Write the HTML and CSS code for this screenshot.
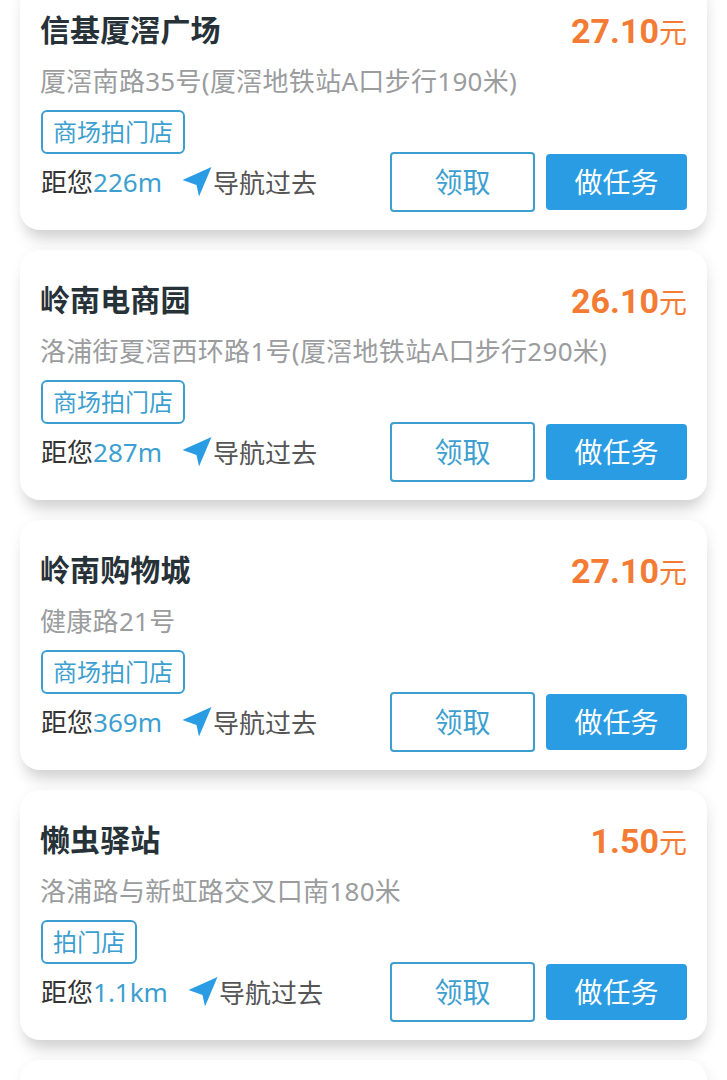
FILE: index.html
```html
<!DOCTYPE html>
<html lang="zh-CN">
<head>
  <meta charset="UTF-8" />
  <meta name="viewport" content="width=device-width, initial-scale=1.0"/>
  <title>任务列表</title>
  <link rel="stylesheet" href="styles.css">
</head>
<body>

<div class="task-list">

  <div class="task-card">
    <div class="task-head">
      <div class="task-name">信基厦滘广场</div>
      <div class="task-price"><b>27.10</b>元</div>
    </div>
    <div class="task-addr">厦滘南路35号(厦滘地铁站A口步行190米)</div>
    <div class="task-tag">商场拍门店</div>
    <div class="task-foot">
      <div class="task-dist">距您<span class="dist-num">226m</span></div>
      <div class="task-nav">
        <svg class="nav-icon" viewBox="0 0 30 30"><path d="M0.5 13 L29.5 0 L17 29.5 L14.5 18 Z"/></svg>导航过去
      </div>
      <div class="btn btn-line">领取</div>
      <div class="btn btn-fill">做任务</div>
    </div>
  </div>

  <div class="task-card">
    <div class="task-head">
      <div class="task-name">岭南电商园</div>
      <div class="task-price"><b>26.10</b>元</div>
    </div>
    <div class="task-addr">洛浦街夏滘西环路1号(厦滘地铁站A口步行290米)</div>
    <div class="task-tag">商场拍门店</div>
    <div class="task-foot">
      <div class="task-dist">距您<span class="dist-num">287m</span></div>
      <div class="task-nav">
        <svg class="nav-icon" viewBox="0 0 30 30"><path d="M0.5 13 L29.5 0 L17 29.5 L14.5 18 Z"/></svg>导航过去
      </div>
      <div class="btn btn-line">领取</div>
      <div class="btn btn-fill">做任务</div>
    </div>
  </div>

  <div class="task-card">
    <div class="task-head">
      <div class="task-name">岭南购物城</div>
      <div class="task-price"><b>27.10</b>元</div>
    </div>
    <div class="task-addr">健康路21号</div>
    <div class="task-tag">商场拍门店</div>
    <div class="task-foot">
      <div class="task-dist">距您<span class="dist-num">369m</span></div>
      <div class="task-nav">
        <svg class="nav-icon" viewBox="0 0 30 30"><path d="M0.5 13 L29.5 0 L17 29.5 L14.5 18 Z"/></svg>导航过去
      </div>
      <div class="btn btn-line">领取</div>
      <div class="btn btn-fill">做任务</div>
    </div>
  </div>

  <div class="task-card">
    <div class="task-head">
      <div class="task-name">懒虫驿站</div>
      <div class="task-price"><b>1.50</b>元</div>
    </div>
    <div class="task-addr">洛浦路与新虹路交叉口南180米</div>
    <div class="task-tag">拍门店</div>
    <div class="task-foot">
      <div class="task-dist">距您<span class="dist-num">1.1km</span></div>
      <div class="task-nav">
        <svg class="nav-icon" viewBox="0 0 30 30"><path d="M0.5 13 L29.5 0 L17 29.5 L14.5 18 Z"/></svg>导航过去
      </div>
      <div class="btn btn-line">领取</div>
      <div class="btn btn-fill">做任务</div>
    </div>
  </div>

  <div class="task-card"></div>

</div>

</body>
</html>
```

FILE: styles.css
```css
* { box-sizing: border-box; margin: 0; padding: 0; }
html, body {
  height: 1080px;
  overflow: hidden;
  background: #fff;
}
body {
  font-family: "Noto Sans", "Noto Sans CJK SC", sans-serif;
}
.task-list {
  display: flex;
  flex-direction: column;
  gap: 20px;
  height: 1100px;
  margin-top: -20px;
  padding: 0 20px;
  overflow: hidden;
}
.task-card {
  flex: none;
  height: 250px;
  padding: 30px 20px 0 21px;
  background: #fff;
  border-radius: 20px;
  box-shadow: 2px 4px 14px rgba(0,0,0,0.08), 0 16px 16px -6px rgba(0,0,0,0.13);
}
.task-head {
  display: flex;
  justify-content: space-between;
  align-items: center;
  height: 40px;
}
.task-name {
  padding-bottom: 5px;
  font-size: 30px;
  font-weight: 700;
  letter-spacing: 0.1px;
  margin-left: -1px;
  color: #263238;
}
.task-price {
  padding-top: 2px;
  font-size: 28px;
  color: #f47b33;
}
.task-price b {
  font-family: Roboto, sans-serif;
  font-size: 34px;
  font-weight: 700;
}
.task-addr {
  margin-top: 11px;
  margin-left: -1px;
  height: 40px;
  line-height: 40px;
  font-size: 26px;
  letter-spacing: 0.3px;
  color: #9a9c9e;
  white-space: nowrap;
}
.task-tag {
  display: inline-block;
  height: 44px;
  line-height: 40px;
  margin-top: 9px;
  padding: 0 10px;
  font-size: 24px;
  color: #3d9fd0;
  border: 2px solid #3d9fd0;
  border-radius: 6px;
  vertical-align: top;
}
.task-foot {
  display: flex;
  align-items: center;
  height: 60px;
  margin-top: -2px;
}
.task-dist {
  padding-bottom: 2px;
  font-size: 26px;
  color: #333;
}
.dist-num {
  color: #3d9fd0;
}
.task-nav {
  display: flex;
  align-items: center;
  margin-left: 20px;
  font-size: 26px;
  color: #555;
}
.nav-icon {
  width: 30px;
  height: 30px;
  margin-right: 1px;
  fill: #2a9ce4;
}
.btn {
  display: flex;
  align-items: center;
  justify-content: center;
  padding-bottom: 2px;
  font-size: 28px;
  border-radius: 4px;
}
.btn-line {
  width: 145px;
  height: 60px;
  margin-left: auto;
  color: #3d9fd0;
  background: #fff;
  border: 2px solid #3d9fd0;
}
.btn-fill {
  width: 141px;
  height: 56px;
  margin-left: 11px;
  color: #fff;
  background: #2a9ce4;
}
```
